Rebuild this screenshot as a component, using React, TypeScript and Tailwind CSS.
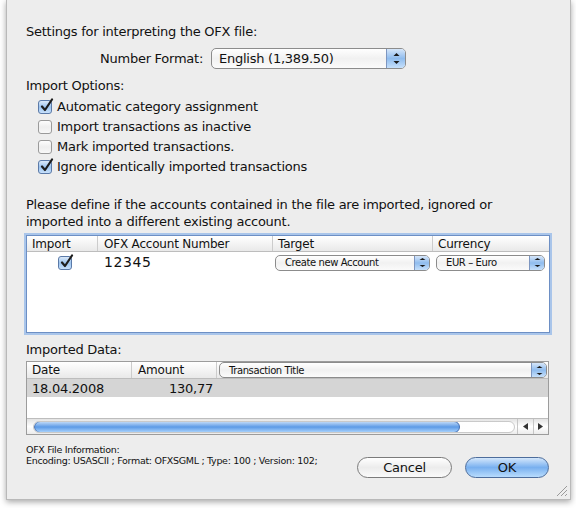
import React from "react"

const font = "font-['Lucida_Grande','DejaVu_Sans',sans-serif]"

function Checkbox({ checked }: { checked?: boolean }) {
  return (
    <div
      className={`relative w-[14px] h-[14px] rounded-[3px] border shrink-0 ${
        checked
          ? "border-[#5b7aa8] bg-gradient-to-b from-[#dbe9f8] via-[#9cc4ef] to-[#c7e0fb]"
          : "border-[#9a9a9a] bg-gradient-to-b from-[#fdfdfd] via-[#eeeeee] to-[#f8f8f8]"
      }`}
    >
      {checked && (
        <svg className="absolute left-[1px] -top-[3px]" width="14" height="15" viewBox="0 0 14 15">
          <path d="M2 8.5 L5 12 L12 1.5" fill="none" stroke="#1d1d1d" strokeWidth="2.2" strokeLinecap="round" strokeLinejoin="round" />
        </svg>
      )}
    </div>
  )
}

function Arrows({ size = 5 }: { size?: number }) {
  return (
    <svg width="7" height={size * 2 + 3} viewBox={`0 0 7 ${size * 2 + 3}`}>
      <path d={`M3.5 0 L6.5 ${size - 1} L0.5 ${size - 1} Z`} fill="#1a1a1a" />
      <path d={`M3.5 ${size * 2 + 3} L6.5 ${size + 4} L0.5 ${size + 4} Z`} fill="#1a1a1a" />
    </svg>
  )
}

function Popup({ label, small, className }: { label: string; small?: boolean; className: string }) {
  return (
    <div
      className={`flex items-stretch border border-[#8c8c8c] bg-gradient-to-b from-[#ffffff] via-[#f1f1f1] to-[#fbfbfb] overflow-hidden ${
        small ? "rounded-[5px] h-[16px]" : "rounded-[5px] h-[21px]"
      } ${className}`}
    >
      <div
        className={`flex-1 flex items-center text-[#111] ${
          small ? "pl-[9px] text-[10px] tracking-[-0.4px]" : "pl-[7px] text-[13px] tracking-[-0.25px]"
        }`}
      >
        {label}
      </div>
      <div
        className={`flex items-center justify-center border-l border-[#7d96c0] bg-gradient-to-b from-[#d6e6f9] via-[#8fbcee] to-[#c6e0fb] ${
          small ? "w-[15px]" : "w-[19px]"
        }`}
      >
        <Arrows size={small ? 3 : 4} />
      </div>
    </div>
  )
}

function AquaButton({ label, primary }: { label: string; primary?: boolean }) {
  return (
    <div
      className={`h-[21px] rounded-full border flex items-center justify-center text-[13px] text-[#111] ${
        primary
          ? "w-[84px] border-[#4d6d9c] bg-gradient-to-b from-[#d4e7fb] via-[#79b0ef] to-[#b8dcfd]"
          : "w-[95px] border-[#7b7b7b] bg-gradient-to-b from-[#ffffff] via-[#ececec] to-[#fafafa]"
      }`}
    >
      {label}
    </div>
  )
}

const accounts = [{ number: "12345", target: "Create new Account", currency: "EUR – Euro" }]
const rows = [{ date: "18.04.2008", amount: "130,77" }]

export default function App() {
  return (
    <div className={`w-[576px] h-[508px] bg-white overflow-hidden ${font}`}>
      <div className="ml-[6px] w-[565px] h-[500px] bg-[#ededed] border-x border-b border-[#b9b9b9] shadow-[0_2px_6px_rgba(0,0,0,0.35)] flex flex-col pl-[19px] pr-[20px] pt-[24px] text-[13px] tracking-[-0.25px] text-[#111]">
        <div className="h-[16px] leading-[16px]">Settings for interpreting the OFX file:</div>

        <div className="mt-[8px] flex items-center h-[21px]">
          <span className="ml-[74px] mr-[8px]">Number Format:</span>
          <Popup label="English (1,389.50)" className="w-[195px]" />
        </div>

        <div className="mt-[9px] h-[16px] leading-[16px]">Import Options:</div>

        <div className="mt-[3px] flex flex-col pl-[12px]">
          {[
            ["Automatic category assignment", true],
            ["Import transactions as inactive", false],
            ["Mark imported transactions.", false],
            ["Ignore identically imported transactions", true],
          ].map(([label, checked]) => (
            <div key={label as string} className="h-[20px] flex items-center gap-[5px]">
              <Checkbox checked={checked as boolean} />
              <span>{label as string}</span>
            </div>
          ))}
        </div>

        <div className="mt-[19px] leading-[17px]">
          Please define if the accounts contained in the file are imported, ignored or
          <br />
          imported into a different existing account.
        </div>

        {/* accounts table, focused */}
        <div className="mt-[5px] w-[524px] h-[98px] bg-white border border-[#6d8fc4] shadow-[0_0_0_2px_#a9c5ea] flex flex-col">
          <div className="h-[16px] flex text-[12px] tracking-[-0.2px] bg-gradient-to-b from-[#ffffff] to-[#e9e9e9] border-b border-[#bdbdbd]">
            <div className="w-[71px] pl-[5px] leading-[16px] border-r border-[#cccccc]">Import</div>
            <div className="w-[175px] pl-[6px] leading-[16px] border-r border-[#cccccc]">OFX Account Number</div>
            <div className="w-[160px] pl-[5px] leading-[16px] border-r border-[#cccccc]">Target</div>
            <div className="flex-1 pl-[5px] leading-[16px]">Currency</div>
          </div>
          {accounts.map((a) => (
            <div key={a.number} className="h-[21px] flex items-center">
              <div className="w-[71px] flex justify-center pl-[4px]">
                <Checkbox checked />
              </div>
              <div className="w-[175px] pl-[6px] text-[14px] tracking-[0.6px]">{a.number}</div>
              <div className="w-[160px] pl-[2px]">
                <Popup small label={a.target} className="w-[155px]" />
              </div>
              <div className="flex-1 pl-[3px] pr-[4px]">
                <Popup small label={a.currency} className="w-full" />
              </div>
            </div>
          ))}
        </div>

        <div className="mt-[9px] h-[16px] leading-[16px]">Imported Data:</div>

        {/* imported transactions preview */}
        <div className="mt-[3px] w-[523px] h-[74px] bg-white border border-[#9c9c9c] flex flex-col">
          <div className="h-[17px] flex text-[12px] tracking-[-0.2px] bg-gradient-to-b from-[#ffffff] to-[#e9e9e9] border-b border-[#bdbdbd]">
            <div className="w-[105px] pl-[5px] leading-[16px] border-r border-[#cccccc]">Date</div>
            <div className="w-[85px] pl-[6px] leading-[16px] border-r border-[#cccccc]">Amount</div>
            <div className="flex-1 pl-[2px] pr-[1px]">
              <Popup small label="Transaction Title" className="w-full" />
            </div>
          </div>
          {rows.map((r) => (
            <div key={r.date} className="h-[18px] flex items-center bg-[#d5d5d5] text-[13px] pt-[1px]">
              <div className="w-[105px] pl-[5px]">{r.date}</div>
              <div className="w-[81px] text-right">{r.amount}</div>
            </div>
          ))}
          <div className="flex-1" />
          {/* horizontal scroller */}
          <div className="h-[16px] flex items-center bg-gradient-to-b from-[#e3e3e3] via-[#ffffff] to-[#ececec] border-t border-[#bdbdbd]">
            <div className="w-[490px] pl-[6px] pr-[2px] h-full flex items-center">
              <div className="w-full h-[12px] rounded-full bg-gradient-to-r from-[#f4f4f4] to-[#ffffff] border border-[#c9c9c9] flex items-center overflow-hidden">
                <div className="w-[426px] h-[12px] -my-px rounded-full border border-[#3f6bb0] bg-gradient-to-b from-[#bcd7f6] via-[#5c9ae6] to-[#a6d0fb]" />
              </div>
            </div>
            <div className="flex-1 flex h-full">
              <div className="flex-1 flex items-center justify-center border-l border-[#c6c6c6]">
                <svg width="5" height="7"><path d="M0 3.5 L5 0 L5 7 Z" fill="#333" /></svg>
              </div>
              <div className="flex-1 flex items-center justify-center border-l border-[#c6c6c6]">
                <svg width="5" height="7"><path d="M5 3.5 L0 0 L0 7 Z" fill="#333" /></svg>
              </div>
            </div>
          </div>
        </div>

        <div className="mt-[7px] flex items-start">
          <div className="text-[9.5px] tracking-[-0.3px] leading-[11px] pt-[2px] w-[330px]">
            OFX File Information:
            <br />
            Encoding: USASCII ; Format: OFXSGML ; Type: 100 ; Version: 102;
          </div>
          <div className="ml-auto mt-[15px] flex gap-[13px] mr-[1px]">
            <AquaButton label="Cancel" />
            <AquaButton label="OK" primary />
          </div>
        </div>

        <div className="flex-1" />
        <div className="self-end -mr-[18px] mb-[2px]">
          <svg width="12" height="12" viewBox="0 0 12 12">
            <path d="M11 1 L1 11 M11 5 L5 11 M11 9 L9 11" stroke="#9a9a9a" strokeWidth="1" />
          </svg>
        </div>
      </div>
    </div>
  )
}
